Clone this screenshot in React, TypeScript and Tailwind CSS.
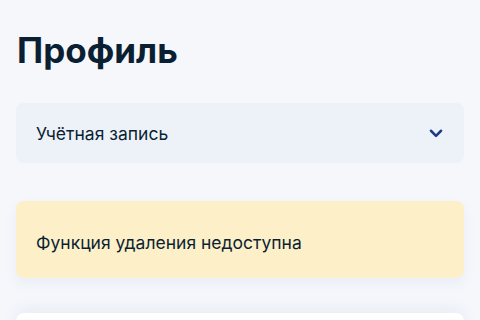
import React from "react";

export default function App() {
  return (
    <div className="w-[480px] h-[320px] overflow-hidden bg-[#f5f7fb] px-4 text-[#0b1f33]" style={{ fontFamily: "Inter, 'Noto Sans', sans-serif" }}>
      <h1 className="pt-[30px] pl-[1px] text-[35px] leading-[41px] font-bold">Профиль</h1>
      <div className="mt-[32px] h-[60px] rounded-lg bg-[#edf2f9] flex items-center justify-between pl-5 pr-[19px]">
        <span className="text-[17.5px] pt-[2px]">Учётная запись</span>
        <svg width="18" height="18" viewBox="0 0 16 16" fill="none" className="text-[#1d3a8a]">
          <path d="M3.5 6 L8 10.5 L12.5 6" stroke="currentColor" strokeWidth="2.2" strokeLinecap="round" strokeLinejoin="round" />
        </svg>
      </div>
      <div className="mt-[38px] h-[77px] rounded-lg bg-[#fdf0c8] flex items-center pl-5 shadow-[0_6px_12px_rgba(180,190,220,0.15)]">
        <span className="text-[17.5px] pt-[8px]">Функция удаления недоступна</span>
      </div>
      <div className="mt-[35px] h-[60px] rounded-lg bg-white shadow-[0_-4px_16px_rgba(180,190,220,0.2)]" />
    </div>
  );
}
